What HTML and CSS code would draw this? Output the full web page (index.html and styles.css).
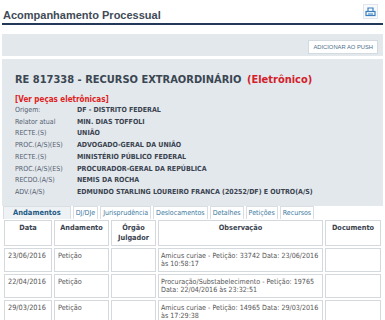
FILE: index.html
```html
<!DOCTYPE html>
<html lang="pt-BR">

<head>
    <meta charset="UTF-8">
    <title>Acompanhamento Processual</title>
    <link rel="stylesheet" href="styles.css">
</head>

<body>
    <div class="header">
        <h1>Acompanhamento Processual</h1>
        <a class="print" href="#" title="Imprimir">
            <svg width="11" height="10" viewBox="0 0 11 10">
                <path d="M3 4V1h5v3" fill="none" stroke="#3a7fc0" stroke-width="1.2"/>
                <rect x="1" y="4.5" width="9" height="4" fill="none" stroke="#3a7fc0" stroke-width="1.2"/>
                <path d="M3 7h5" stroke="#3a7fc0" stroke-width="1"/>
            </svg>
        </a>
    </div>

    <div class="toolbar">
        <button class="push">ADICIONAR AO PUSH</button>
    </div>

    <div class="process">
        <h2>RE 817338 - RECURSO EXTRAORDINÁRIO <span class="eletronico">(Eletrônico)</span></h2>
        <a class="pecas" href="#">[Ver peças eletrônicas]</a>
        <table class="partes">
            <tr><td class="label">Origem:</td><td>DF - DISTRITO FEDERAL</td></tr>
            <tr><td class="label">Relator atual</td><td>MIN. DIAS TOFFOLI</td></tr>
            <tr><td class="label">RECTE.(S)</td><td>UNIÃO</td></tr>
            <tr><td class="label">PROC.(A/S)(ES)</td><td>ADVOGADO-GERAL DA UNIÃO</td></tr>
            <tr><td class="label">RECTE.(S)</td><td>MINISTÉRIO PÚBLICO FEDERAL</td></tr>
            <tr><td class="label">PROC.(A/S)(ES)</td><td>PROCURADOR-GERAL DA REPÚBLICA</td></tr>
            <tr><td class="label">RECDO.(A/S)</td><td>NEMIS DA ROCHA</td></tr>
            <tr><td class="label">ADV.(A/S)</td><td>EDMUNDO STARLING LOUREIRO FRANCA (20252/DF) E OUTRO(A/S)</td></tr>
        </table>
    </div>

    <ul class="tabs">
        <li class="active">Andamentos</li>
        <li>DJ/DJe</li>
        <li>Jurisprudência</li>
        <li>Deslocamentos</li>
        <li>Detalhes</li>
        <li>Petições</li>
        <li>Recursos</li>
    </ul>

    <table class="andamentos">
        <thead>
            <tr>
                <th class="c-data">Data</th>
                <th class="c-and">Andamento</th>
                <th class="c-org">Órgão Julgador</th>
                <th class="c-obs">Observação</th>
                <th class="c-doc">Documento</th>
            </tr>
        </thead>
        <tbody>
            <tr>
                <td>23/06/2016</td>
                <td>Petição</td>
                <td></td>
                <td class="obs">Amicus curiae - Petição: 33742 Data: 23/06/2016 às 10:58:17</td>
                <td></td>
            </tr>
            <tr>
                <td>22/04/2016</td>
                <td>Petição</td>
                <td></td>
                <td class="obs">Procuração/Substabelecimento - Petição: 19765 Data: 22/04/2016 às 23:32:51</td>
                <td></td>
            </tr>
            <tr>
                <td>29/03/2016</td>
                <td>Petição</td>
                <td></td>
                <td class="obs">Amicus curiae - Petição: 14965 Data: 29/03/2016 às 17:29:38</td>
                <td></td>
            </tr>
        </tbody>
    </table>
</body>

</html>
```

FILE: styles.css
```css
* {
    margin: 0;
    padding: 0;
    box-sizing: border-box;
}

body {
    font-family: 'DejaVu Sans Condensed', 'DejaVu Sans', sans-serif;
    font-size: 7px;
    color: #555;
    background: #fff;
    padding: 0 2px;
}

.header {
    display: flex;
    justify-content: space-between;
    align-items: flex-end;
    padding: 4px 0 1px 1px;
    border-bottom: 2px solid #24385a;
}

h1 {
    font-family: 'Liberation Sans', Arial, sans-serif;
    font-size: 11px;
    font-weight: bold;
    color: #3f4b57;
    line-height: 14px;
    padding-top: 4px;
}

.print {
    display: flex;
    align-items: center;
    justify-content: center;
    width: 15px;
    height: 15px;
    margin: 0 5px 3px 0;
    border: 1px solid #e2e6ea;
    background: #f7f9fa;
}

.toolbar {
    display: flex;
    justify-content: flex-end;
    background: #e3e8ec;
    margin-top: 9px;
    padding: 6px 5px 2px;
}

.push {
    font-family: 'Liberation Sans', Arial, sans-serif;
    font-size: 5.8px;
    color: #4d6f8c;
    background: #fff;
    border: 1px solid #d3dbe1;
    padding: 3px 4px;
}

.process {
    background: #e3e8ec;
    margin-top: 3px;
    padding: 14px 13px 7px;
}

h2 {
    font-size: 11px;
    font-weight: bold;
    color: #3a4652;
    line-height: 14px;
}

.eletronico {
    color: #d3202a;
    margin-left: 2px;
}

.pecas {
    display: block;
    margin-top: 8px;
    font-size: 8px;
    font-weight: bold;
    color: #e02020;
    text-decoration: none;
    line-height: 10px;
}

.partes {
    border-collapse: collapse;
}

.partes td {
    line-height: 11.7px;
    padding: 0;
    font-weight: bold;
    color: #3a4350;
    white-space: nowrap;
}

.partes td.label {
    font-weight: normal;
    color: #556070;
    width: 62px;
}

.tabs {
    display: flex;
    list-style: none;
    padding-left: 1px;
    gap: 2px;
}

.tabs li {
    font-size: 7px;
    color: #3c7aa0;
    border: 1px solid #d8dee3;
    border-bottom: none;
    padding: 2px 2px 2px;
    line-height: 8px;
}

.tabs li.active {
    font-size: 7.5px;
    font-weight: bold;
    color: #245b85;
    background: #eef2f5;
    padding: 2px 9px 2px;
}

.andamentos {
    width: 100%;
    border-collapse: separate;
    border-spacing: 2px;
    margin-top: -1px;
}

.andamentos th,
.andamentos td {
    border: 1px solid #d4d9dd;
    vertical-align: top;
}

.andamentos th {
    font-size: 7.3px;
    font-weight: bold;
    color: #3a4350;
    text-align: center;
    line-height: 10px;
    padding: 2px 3px 2px;
    height: 25px;
}

.andamentos td {
    font-size: 7.3px;
    line-height: 8.5px;
    padding: 3px 3px 2px;
    height: 22px;
}

.andamentos td.obs {
    font-size: 7.1px;
    padding: 3px 2px 2px 2px;
}

.c-data { width: 48px; }
.c-and { width: 55px; }
.c-org { width: 45px; }
.c-doc { width: 56px; }
```
